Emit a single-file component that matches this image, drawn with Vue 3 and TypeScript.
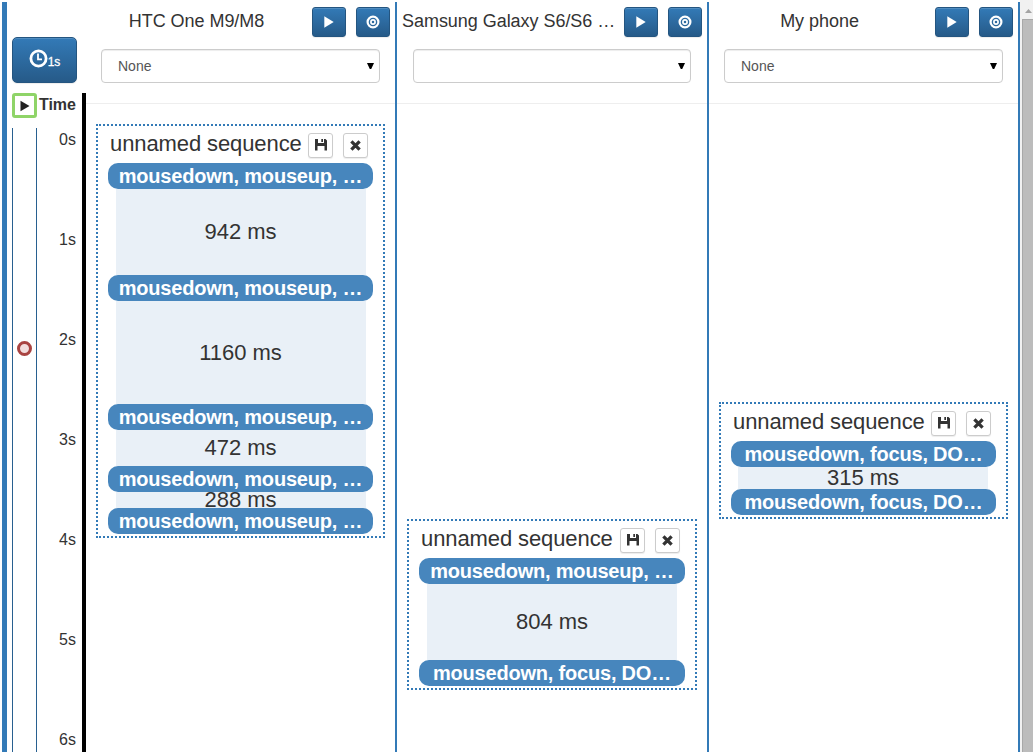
<script setup lang="ts">
interface Sequence {
  top: number
  events: string[]
  gaps: { ms: number; height: number }[]
}
interface Device {
  name: string
  selected: string
  sequence: Sequence
}

const mouse = 'mousedown, mouseup, …'
const focus = 'mousedown, focus, DO…'

const devices: Device[] = [
  {
    name: 'HTC One M9/M8',
    selected: 'None',
    sequence: {
      top: 20,
      events: [mouse, mouse, mouse, mouse, mouse],
      gaps: [
        { ms: 942, height: 86 },
        { ms: 1160, height: 103 },
        { ms: 472, height: 36 },
        { ms: 288, height: 16 },
      ],
    },
  },
  {
    name: 'Samsung Galaxy S6/S6 …',
    selected: '',
    sequence: { top: 415, events: [mouse, focus], gaps: [{ ms: 804, height: 76 }] },
  },
  {
    name: 'My phone',
    selected: 'None',
    sequence: { top: 298, events: [focus, focus], gaps: [{ ms: 315, height: 22 }] },
  },
]

const ticks = [0, 1, 2, 3, 4, 5, 6]
</script>

<template>
  <div class="app">
    <div class="edge"></div>
    <aside class="time">
      <button class="btn primary interval">
        <svg width="19" height="19" viewBox="0 0 19 19">
          <circle cx="9.5" cy="9.5" r="7.6" fill="none" stroke="#fff" stroke-width="2.8" />
          <path d="M9 4.5V10.3H13" fill="none" stroke="#fff" stroke-width="1.8" />
        </svg>
        <span>1s</span>
      </button>
      <div class="axis-head">
        <button class="marker">
          <svg width="10" height="12" viewBox="0 0 10 12"><path d="M0.5 0.8L9.5 6L0.5 11.2Z" fill="#222" /></svg>
        </button>
        <b>Time</b>
      </div>
      <div class="axis">
        <div class="track"><i class="playhead"></i></div>
        <div class="ticks">
          <span v-for="t in ticks" :key="t">{{ t }}s</span>
        </div>
      </div>
    </aside>
    <div class="bar"></div>

    <main class="devices">
      <section v-for="d in devices" :key="d.name" class="device">
        <header>
          <div class="heading">
            <h2>{{ d.name }}</h2>
            <button class="btn primary tool">
              <svg width="10" height="12" viewBox="0 0 10 12"><path d="M0.3 0.2L9.7 6L0.3 11.8Z" fill="#fff" /></svg>
            </button>
            <button class="btn primary tool">
              <svg width="14" height="14" viewBox="0 0 14 14">
                <circle cx="7" cy="7" r="5.4" fill="none" stroke="#fff" stroke-width="2.2" />
                <circle cx="7" cy="7" r="2.1" fill="none" stroke="#fff" stroke-width="1.7" />
              </svg>
            </button>
          </div>
          <div class="select">
            <span>{{ d.selected }}</span>
            <svg width="7" height="6" viewBox="0 0 7 6"><path d="M0 0H7L4.2 6H2.8Z" fill="#000" /></svg>
          </div>
        </header>
        <div class="lane">
          <article class="sequence" :style="{ marginTop: d.sequence.top + 'px' }">
            <div class="seq-head">
              <h3>unnamed sequence</h3>
              <button class="mini">
                <svg width="12" height="12" viewBox="0 0 12 12">
                  <path d="M0 0H3V4H9V0H10.5L12 1.5V11.5H9.5V7H2.5V11.5H0Z M6.3 0H8V3H6.3Z" fill="#333" />
                </svg>
              </button>
              <button class="mini">
                <svg width="11" height="11" viewBox="0 0 11 11"><path d="M1.4 1.4L9.6 9.6M9.6 1.4L1.4 9.6" stroke="#333" stroke-width="3.3" /></svg>
              </button>
            </div>
            <template v-for="(e, i) in d.sequence.events" :key="i">
              <div class="event">{{ e }}</div>
              <div
                v-if="d.sequence.gaps[i]"
                class="gap"
                :style="{ height: d.sequence.gaps[i].height + 'px' }"
              >
                <span>{{ d.sequence.gaps[i].ms }} ms</span>
              </div>
            </template>
          </article>
        </div>
      </section>
    </main>

    <div class="scrollbar">
      <svg width="13" height="19" viewBox="0 0 13 19"><path d="M5 13L8.5 9L12 13Z" fill="#a3a3a3" /></svg>
      <div class="thumb"></div>
    </div>
  </div>
</template>

<style>
body {
  background: #fff;
}
</style>

<style scoped>
* {
  box-sizing: border-box;
}
.app {
  display: flex;
  width: 1033px;
  height: 752px;
  padding-left: 2px;
  overflow: hidden;
  background: #fff;
  color: #333;
  font-family: "Liberation Sans", Arial, sans-serif;
}
svg {
  display: block;
  flex: none;
}
button {
  display: flex;
  align-items: center;
  justify-content: center;
  padding: 0;
  font-family: inherit;
}
.edge {
  width: 5px;
  margin-top: 2px;
  background: #337ab7;
}
.time {
  display: flex;
  flex-direction: column;
  width: 75px;
  padding: 37px 0 0 5px;
}
.primary {
  border: 1px solid #245580;
  border-radius: 3px;
  background: linear-gradient(#337ab7, #265a88);
  box-shadow: inset 0 1px 0 rgba(255, 255, 255, 0.15), 0 1px 1px rgba(0, 0, 0, 0.075);
  color: #fff;
}
.interval {
  flex: none;
  width: 65px;
  height: 46px;
  padding-bottom: 4px;
  border-radius: 5px;
}
.interval span {
  padding-top: 7px;
  font-size: 12px;
  line-height: 14px;
  -webkit-text-stroke: 0.3px #fff;
}
.axis-head {
  display: flex;
  flex: none;
  justify-content: space-between;
  width: 65px;
  padding-right: 1px;
  margin-top: 10px;
  font-size: 16px;
  line-height: 23px;
}
.marker {
  width: 25px;
  height: 25px;
  border: 3px solid #8fd468;
  border-radius: 3px;
  background: #fff;
}
.axis {
  display: flex;
  flex: 1;
  justify-content: space-between;
  width: 65px;
  padding-right: 1px;
  margin-top: 10px;
}
.track {
  width: 25px;
  padding: 213px 0 0 4px;
  border: solid #286090;
  border-width: 0 1px;
}
.playhead {
  display: block;
  width: 15px;
  height: 15px;
  border: 3px solid #a94442;
  border-radius: 50%;
  background: #f2dede;
}
.ticks span {
  display: block;
  height: 100px;
  font-size: 16px;
  line-height: 23px;
}
.bar {
  width: 4px;
  margin-top: 93px;
  background: #000;
}
.devices {
  display: grid;
  grid-template-columns: 311px 312px 311px;
}
.device {
  min-width: 0;
  margin-top: 2px;
  border-right: 2px solid #337ab7;
}
header {
  height: 102px;
  padding: 5px 5px 0;
  border-bottom: 1px solid #eee;
}
.heading {
  display: flex;
  gap: 10px;
}
h2 {
  flex: 1;
  min-width: 0;
  margin: 0;
  font-size: 18px;
  font-weight: 400;
  letter-spacing: -0.04px;
  line-height: 28px;
  text-align: center;
  white-space: nowrap;
}
.tool {
  flex: none;
  width: 34px;
  height: 30px;
}
.select {
  display: flex;
  align-items: center;
  justify-content: space-between;
  height: 34px;
  margin: 12px 10px 0;
  padding: 0 5px 0 16px;
  border: 1px solid #ccc;
  border-radius: 4px;
  box-shadow: inset 0 1px 1px rgba(0, 0, 0, 0.075);
  color: #555;
  font-size: 14px;
}
.device:nth-child(2) .select {
  margin-left: 11px;
  margin-right: 11px;
}
.lane {
  display: flow-root;
  padding: 0 10px;
}
.sequence {
  padding: 0 10px 2px;
  border: 2px dotted #337ab7;
}
.seq-head {
  display: flex;
  gap: 10px;
  height: 37px;
  padding: 7px 5px 0 2px;
}
h3 {
  flex: 1;
  min-width: 0;
  margin: 0;
  font-size: 22px;
  font-weight: 400;
  letter-spacing: -0.1px;
  line-height: 22px;
  white-space: nowrap;
}
.mini {
  flex: none;
  width: 25px;
  height: 25px;
  padding-bottom: 2px;
  border: 1px solid #ccc;
  border-radius: 3px;
  background: #fff;
  box-shadow: 0 1px 1px rgba(0, 0, 0, 0.075);
}
.mini + .mini {
  padding-bottom: 0;
}
.event {
  position: relative;
  height: 26px;
  border-radius: 10px;
  background: #4786bd;
  color: #fff;
  font-size: 20px;
  font-weight: 700;
  letter-spacing: -0.2px;
  line-height: 26px;
  text-align: center;
  white-space: nowrap;
}
.gap {
  display: flex;
  align-items: center;
  justify-content: center;
  width: 250px;
  margin: 0 auto;
  background: #e9f0f7;
  font-size: 22px;
  line-height: 24px;
}
.device:nth-child(3) .gap {
  margin-left: 7px;
}
.scrollbar {
  flex: 1;
  display: flex;
  flex-direction: column;
  padding-left: 2px;
  background: #f1f1f1;
}
.scrollbar svg {
  margin-left: -2px;
}
.thumb {
  flex: 1;
  border: solid #a8a8a8;
  border-width: 1px 0 0 1px;
  background: #bcbcbc;
}
</style>
